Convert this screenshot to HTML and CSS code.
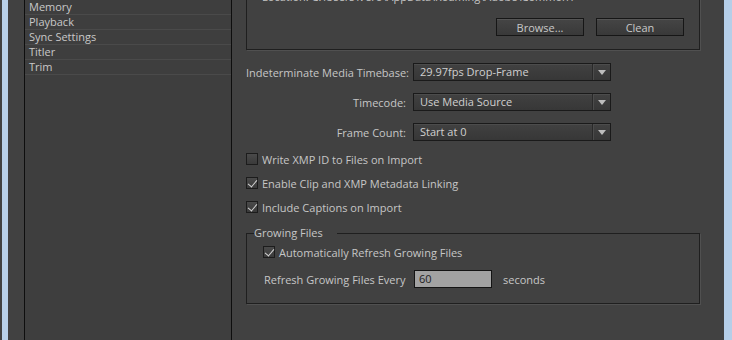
FILE: index.html
```html
<!DOCTYPE html>
<html lang="en">
	<head>
		<meta charset="UTF-8" />
		<meta name="viewport" content="width=device-width, initial-scale=1.0" />
		<title>Preferences - Media</title>

		<link rel="stylesheet" href="styles.css">
	</head>

	<body>
		<div class="window">
			<div class="frameEdge"></div>

			<!-- Category list on the left -->
			<div class="sidebar">
				<ul class="categoryList">
					<li class="categoryItem">Memory</li>
					<li class="categoryItem">Playback</li>
					<li class="categoryItem">Sync Settings</li>
					<li class="categoryItem">Titler</li>
					<li class="categoryItem">Trim</li>
				</ul>
			</div>

			<!-- Settings pane -->
			<div class="pane">
				<div class="cacheGroup">
					<div class="locationText">Location: C:\Users\Vero\AppData\Roaming\Adobe\Common\</div>
					<div class="buttonRow">
						<button class="btn">Browse...</button>
						<button class="btn">Clean</button>
					</div>
				</div>

				<div class="formGrid">
					<label class="formLabel">Indeterminate Media Timebase:</label>
					<div class="dropdown">
						<span class="dropdownValue">29.97fps Drop-Frame</span>
						<span class="dropdownArrow"></span>
					</div>

					<label class="formLabel">Timecode:</label>
					<div class="dropdown">
						<span class="dropdownValue">Use Media Source</span>
						<span class="dropdownArrow"></span>
					</div>

					<label class="formLabel">Frame Count:</label>
					<div class="dropdown">
						<span class="dropdownValue">Start at 0</span>
						<span class="dropdownArrow"></span>
					</div>
				</div>

				<div class="checkList">
					<div class="checkRow">
						<span class="checkBox"></span>
						<span>Write XMP ID to Files on Import</span>
					</div>
					<div class="checkRow">
						<span class="checkBox checked"></span>
						<span>Enable Clip and XMP Metadata Linking</span>
					</div>
					<div class="checkRow">
						<span class="checkBox checked"></span>
						<span>Include Captions on Import</span>
					</div>
				</div>

				<fieldset class="growingGroup">
					<legend class="groupTitle">Growing Files</legend>
					<div class="checkRow">
						<span class="checkBox checked"></span>
						<span>Automatically Refresh Growing Files</span>
					</div>
					<div class="refreshRow">
						<span class="refreshLabel">Refresh Growing Files Every</span>
						<span class="numberField">60</span>
						<span class="unitLabel">seconds</span>
					</div>
				</fieldset>
			</div>

			<div class="frameEdge right"></div>
		</div>
	</body>
</html>
```

FILE: styles.css
```css
body {
	margin: 0;
	width: 732px;
	height: 340px;
	overflow: hidden;
	background-color: #414141;
	font-family: "Open Sans", "Noto Sans", sans-serif;
	font-size: 11px;
	color: #c6c6c6;
}

.window {
	display: flex;
	height: 340px;
}

.frameEdge {
	width: 6px;
	margin-left: 2px;
	background-color: #b8d0e8;
	flex-shrink: 0;
}

.frameEdge.right {
	width: 8px;
	margin-left: 0;
	background-color: #b5cee8;
}

.sidebar {
	width: 208px;
	margin-left: 16px;
	flex-shrink: 0;
	border-left: 1px solid #0e0e0e;
	border-right: 1px solid #0e0e0e;
	background-color: #3e3e3e;
	box-sizing: border-box;
}

.categoryList {
	list-style: none;
	margin: 0;
	padding: 0;
}

.categoryItem {
	height: 14px;
	line-height: 14px;
	padding-left: 4px;
	border-bottom: 1px solid #4a4a4a;
	color: #c8c8c8;
	white-space: nowrap;
}

.pane {
	flex: 1;
	padding: 0 24px 0 14px;
	display: flex;
	flex-direction: column;
}

.cacheGroup {
	margin-top: -30px;
	height: 80px;
	box-sizing: border-box;
	border: 1px solid #1f1f1f;
	box-shadow: 1px 1px 0 #505050;
	padding: 19px 15px 0 15px;
}

.locationText {
	height: 14px;
	line-height: 14px;
	color: #c6c6c6;
	white-space: nowrap;
}

.buttonRow {
	display: flex;
	justify-content: flex-end;
	gap: 12px;
	margin-top: 14px;
}

.btn {
	width: 88px;
	height: 18px;
	padding: 0;
	font-family: inherit;
	font-size: 11px;
	color: #c8c8c8;
	background: linear-gradient(#454545, #393939);
	border: 1px solid #161616;
	box-shadow: inset 0 1px 0 #555555;
}

.formGrid {
	display: grid;
	grid-template-columns: 160px 198px;
	column-gap: 7px;
	row-gap: 12px;
	margin-top: 13px;
	align-items: center;
}

.formLabel {
	text-align: right;
	white-space: nowrap;
}

.dropdown {
	display: flex;
	height: 18px;
	box-sizing: border-box;
	border: 1px solid #1a1a1a;
	background: linear-gradient(#414141, #373737);
	box-shadow: inset 0 1px 0 #4c4c4c;
}

.dropdownValue {
	flex: 1;
	padding-left: 6px;
	line-height: 16px;
	color: #d0d0d0;
	white-space: nowrap;
}

.dropdownArrow {
	width: 17px;
	border-left: 1px solid #2a2a2a;
	box-shadow: inset 1px 0 0 #4c4c4c;
	display: flex;
	align-items: center;
	justify-content: center;
}

.dropdownArrow::after {
	content: "";
	width: 0;
	height: 0;
	border-left: 4px solid transparent;
	border-right: 4px solid transparent;
	border-top: 5px solid #bdbdbd;
	margin-top: 1px;
}

.checkList {
	margin-top: 11px;
	display: flex;
	flex-direction: column;
	gap: 10px;
}

.checkRow {
	display: flex;
	align-items: center;
	gap: 4px;
	height: 14px;
	white-space: nowrap;
}

.checkBox {
	width: 12px;
	height: 12px;
	box-sizing: border-box;
	border: 1px solid #1c1c1c;
	background: linear-gradient(#4a4a4a, #3a3a3a);
	position: relative;
	flex-shrink: 0;
}

.checkBox.checked::after {
	content: "";
	position: absolute;
	left: 3px;
	top: 0px;
	width: 4px;
	height: 8px;
	border-right: 1.5px solid #d4d4d4;
	border-bottom: 1.5px solid #d4d4d4;
	transform: rotate(40deg);
}

.growingGroup {
	margin: 12px 0 0 0;
	height: 78px;
	box-sizing: border-box;
	border: 1px solid #1f1f1f;
	box-shadow: 1px 1px 0 #505050;
	padding: 5px 0 0 16px;
}

.groupTitle {
	margin-left: -9px;
	padding: 0 14px 0 0;
	line-height: 14px;
	color: #c6c6c6;
}

.refreshRow {
	display: flex;
	align-items: center;
	margin-top: 11px;
	margin-left: 1px;
	white-space: nowrap;
}

.refreshLabel {
	width: 150px;
}

.numberField {
	width: 78px;
	height: 18px;
	box-sizing: border-box;
	border: 1px solid #141414;
	background-color: #a2a2a2;
	color: #1e1e1e;
	line-height: 16px;
	padding-left: 4px;
}

.unitLabel {
	margin-left: 11px;
}
```
